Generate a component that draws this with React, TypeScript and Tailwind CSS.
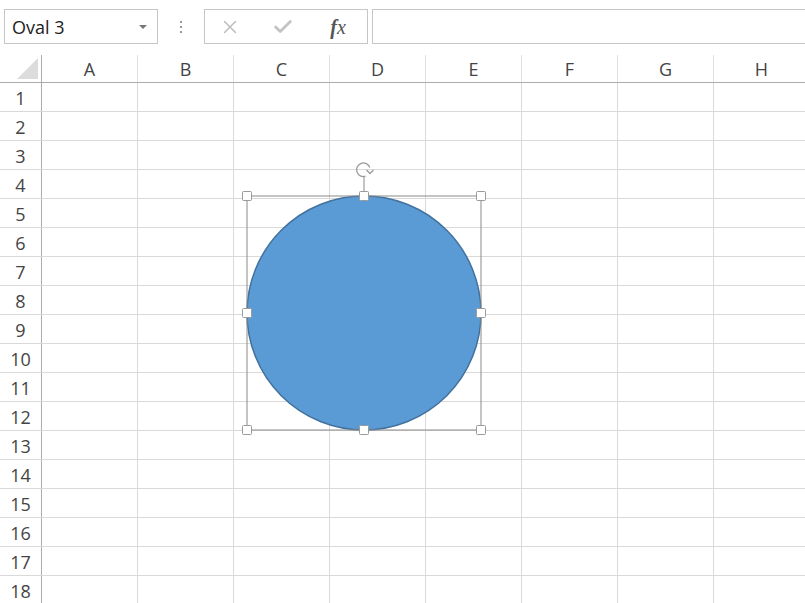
import { X, Check } from 'lucide-react';

const COLUMNS = ['A', 'B', 'C', 'D', 'E', 'F', 'G', 'H'];
const ROWS = Array.from({ length: 18 }, (_, i) => i + 1);

const font = { fontFamily: '"Open Sans", "Noto Sans", sans-serif' };

function FormulaBar() {
  return (
    <div className="flex h-[55px] items-start pt-[9px] bg-white">
      <div className="ml-[4px] flex h-[35px] w-[154px] items-center border border-[#c6c6c6] pl-[7px] pr-[10px]">
        <span className="flex-1 text-[18px] leading-none text-[#222]">Oval 3</span>
        <span className="h-0 w-0 border-x-[4px] border-t-[4px] border-x-transparent border-t-[#777]" />
      </div>
      <div className="flex h-[35px] w-[46px] flex-col items-center justify-center gap-[3px]">
        <span className="h-[2px] w-[2px] bg-[#999]" />
        <span className="h-[2px] w-[2px] bg-[#999]" />
        <span className="h-[2px] w-[2px] bg-[#999]" />
      </div>
      <div className="flex h-[35px] w-[164px] items-center border border-[#c6c6c6]">
        <div className="flex w-[50px] justify-center">
          <X className="h-[22px] w-[22px] text-[#bdbdbd]" strokeWidth={1.6} />
        </div>
        <div className="flex w-[56px] justify-center">
          <Check className="h-[22px] w-[22px] text-[#c3c3c3]" strokeWidth={3} />
        </div>
        <div className="flex w-[54px] justify-center">
          <span className="text-[20px] italic leading-none text-[#555]" style={{ fontFamily: '"Liberation Serif", serif' }}>
            <b className="font-semibold">f</b>x
          </span>
        </div>
      </div>
      <div className="ml-[4px] h-[35px] flex-1 border-y border-l border-[#c6c6c6]" />
    </div>
  );
}

function Shape() {
  return (
    <svg className="pointer-events-none absolute left-0 top-0" width="805" height="550" viewBox="0 55 805 550">
      <circle cx="364" cy="313" r="117" fill="#5b9bd5" stroke="#41719c" strokeWidth="1.5" />
      <rect x="247" y="196" width="234" height="234" fill="none" stroke="#8a8a8a" strokeWidth="1" />
      <line x1="364" y1="177" x2="364" y2="192" stroke="#8a8a8a" strokeWidth="1" />
      <path d="M369.8 167.5 A6.8 6.8 0 1 0 365.5 176.2" fill="none" stroke="#9a9a9a" strokeWidth="1.3" />
      <path d="M366.5 170 L370 173.5 L373.5 170" fill="none" stroke="#9a9a9a" strokeWidth="1.3" />
      {[
        [247, 196], [364, 196], [481, 196],
        [247, 313], [481, 313],
        [247, 430], [364, 430], [481, 430],
      ].map(([x, y], i) => (
        <rect key={i} x={x - 4.5} y={y - 4.5} width="9" height="9" rx="1" fill="#fff" stroke="#9a9a9a" strokeWidth="1" />
      ))}
    </svg>
  );
}

export default function App() {
  return (
    <div className="h-[603px] w-[805px] overflow-hidden bg-white" style={font}>
      <FormulaBar />
      <div className="relative">
        <div className="flex h-[28px] border-b border-[#ababab]">
          <div className="relative w-[42px] shrink-0 border-r border-[#ababab]">
            <span
              className="absolute bottom-[3px] right-[3px] h-[21px] w-[21px] bg-[#dcdcdc]"
              style={{ clipPath: 'polygon(100% 0, 100% 100%, 0 100%)' }}
            />
          </div>
          {COLUMNS.map(c => (
            <div key={c} className="flex w-[96px] shrink-0 items-center justify-center border-r border-[#e1e1e1] pt-[2px] text-[18px] text-[#444]">
              {c}
            </div>
          ))}
        </div>
        {ROWS.map(r => (
          <div key={r} className="flex h-[29px] border-b border-[#d9d9d9]">
            <div className="flex w-[42px] shrink-0 items-center justify-center border-r border-[#ababab] pt-[2px] text-[18px] text-[#444]">
              {r}
            </div>
            {COLUMNS.map(c => (
              <div key={c} className="w-[96px] shrink-0 border-r border-[#d9d9d9]" />
            ))}
          </div>
        ))}
        <Shape />
      </div>
    </div>
  );
}
